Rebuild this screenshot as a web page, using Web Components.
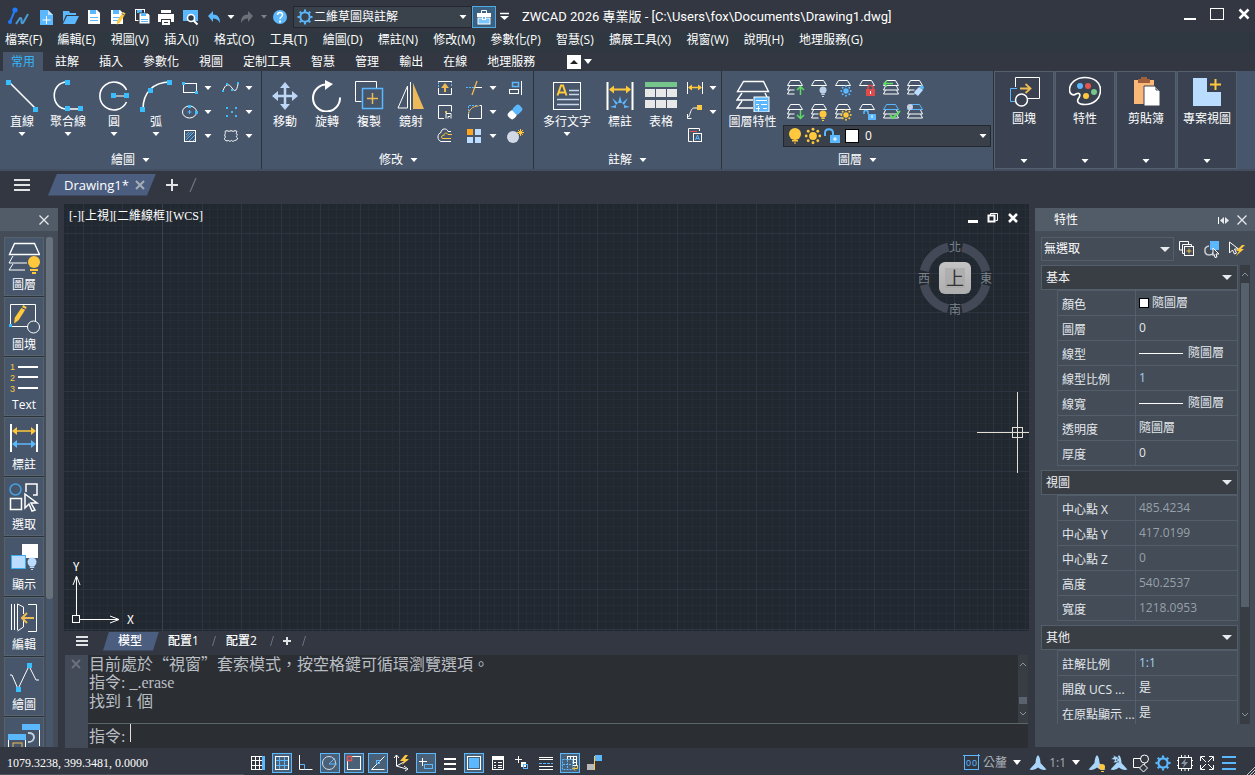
<!DOCTYPE html>
<html lang="zh-Hant">
<head>
<meta charset="utf-8">
<title>ZWCAD 2026</title>
<style>
html,body{margin:0;height:100%;background:#323841;overflow:hidden}
body{font:12px/16px "Open Sans","Noto Sans CJK TC",sans-serif;color:#fff}
</style>
</head>
<body>
<cad-app></cad-app>
<script>
const base = `:host{display:block}*{box-sizing:border-box}
button,select,input{font:inherit;color:inherit;background:none;border:0;padding:0;margin:0;border-radius:0;outline:0}
select{appearance:none}option{color:#000}`;
function define(name, css, html, setup) {
  const t = document.createElement('template');
  t.innerHTML = `<style>${base}${css}</style>${html}`;
  customElements.define(name, class extends HTMLElement {
    constructor() { super(); this.attachShadow({mode: 'open'}).append(t.content.cloneNode(true)); }
    connectedCallback() { if (setup) setup(this, this.shadowRoot); }
  });
}

/* ---------- icon library ---------- */
const W = 'stroke="#fff"', B = 'stroke="#5bb8ff"', Y = 'stroke="#ffc83d"';
const fb = 'fill="#5bb8ff"', fw = 'fill="#fff"', fy = 'fill="#ffc83d"';
const sq = (x, y, s = 3, f = '#38bdff') => `<rect x="${x}" y="${y}" width="${s}" height="${s}" fill="${f}" stroke="none"/>`;
const p = (d, a = W) => `<path d="${d}" ${a}/>`;
const r = (x, y, w, h, a = W) => `<rect x="${x}" y="${y}" width="${w}" height="${h}" ${a}/>`;
const c = (x, y, q, a = W) => `<circle cx="${x}" cy="${y}" r="${q}" ${a}/>`;
const bulb = (x, y, q, f) => c(x, y, q, `fill="${f}"`) + r(x - q * .5, y + q, q, 1.5, `fill="${f}"`) + r(x - 1, y + q + 2.5, 2, 1, `fill="${f}"`);
const sun = (x, y, f, k = 1) => { let s = c(x, y, 3 * k, `fill="${f}"`); for (let i = 0; i < 8; i++) { const a = i * Math.PI / 4; s += c(+(x + 5.2 * k * Math.cos(a)).toFixed(1), +(y + 5.2 * k * Math.sin(a)).toFixed(1), 1.1 * k, `fill="${f}"`); } return s; };
const top1 = (a = W) => p('M5.5 2.5h9l3 5h-15z', a);
const lay = (a = W) => top1(a) + p('M4.5 8l-2 4h7M4.5 12l-2 4h7', a);
const layw = a => top1(a) + p('M4.5 8l-2 4h15l-2-4M4.5 12l-2 4h15l-2-4');
const floppy = (x, y) => `<path d="M${x} ${y}h9l3 3v11h-12z" ${fw}/>` + r(x + 2, y, 6, 4, fb) + r(x + 2, y + 7, 8, 1, fb) + r(x + 2, y + 10, 8, 1, fb);
const gear = (x, y, q, f, w) => { let s = c(x, y, q * .62, `stroke="${f}" stroke-width="${w}"`); for (let i = 0; i < 8; i++) { const a = i * Math.PI / 4; s += `<path d="M${(x + q * .7 * Math.cos(a)).toFixed(1)} ${(y + q * .7 * Math.sin(a)).toFixed(1)}L${(x + q * Math.cos(a)).toFixed(1)} ${(y + q * Math.sin(a)).toFixed(1)}" stroke="${f}" stroke-width="${w}"/>`; } return s; };
const starP = (a = 'fill="#a9d6fa"') => `<path d="M10 2c2 2 2.500 6 2.500 8l6 6.500c-3 1-6 0-8.500-2-2.500 2-5.500 3-8.500 2l6-6.500c0-2 .5-6 2.500-8z" ${a}/>`;
const pencil = (x, y, k) => `<g transform="translate(${x} ${y}) scale(${k})"><path d="M9 0l3 2-7 11-4 3 .5-5z" ${fy}/><path d="M7 2l4 2" stroke="#47566b"/></g>`;
const BIG = 32, SM = 20;
const icons = {
  logo: [24, 22, p('M9 4L4 16', 'stroke="#2b7cf2" stroke-width="2"') + c(9, 4, 2.600, 'fill="#1f7bff"') + c(4, 16, 2, 'fill="#1f7bff"') + p('M10 18l4-6c3-1 0 7 3 5l5-9', 'stroke="#4a9ad4" stroke-width="2"')],
  new: [SM, SM, `<path d="M4 3h8l5 5v10h-13z" ${fb}/><path d="M12 3v5h5z" fill="#c4e4ff"/>` + p('M10.500 9v8M6.500 13h8')],
  open: [SM, SM, `<path d="M3 4h6l1 2h6v2h-10l-3 7z" ${fb}/><path d="M7 9h12l-4 8h-12z" ${fb}/>`],
  save: [SM, SM, floppy(4, 3)],
  saveas: [SM, SM, floppy(3, 3) + pencil(8, 5, .8)],
  saveall: [SM, SM, r(3.5, 2.5, 9, 11, W) + r(5, 3, 5, 3, fb) + `<path d="M7 6h9l2 2v9h-11z" ${fw} stroke="#323841"/>` + r(9, 6, 5, 3, fb) + r(9, 12, 7, 1, fb) + r(9, 14, 7, 1, fb)],
  print: [SM, SM, r(5, 3, 10, 3, fw) + `<path d="M2 7h16v8h-3v-3h-10v3h-3z" ${fw}/>` + r(6, 13, 8, 5, fw) + r(8, 15, 4, 1, 'fill="#323841"')],
  preview: [SM, SM, r(3, 3, 15, 11, fb) + c(11, 11, 3.5, 'fill="#323841" stroke="#fff" stroke-width="1.5"') + p('M13.500 13.500l4 4', W + ' stroke-width="2"')],
  undo: [SM, SM, `<path d="M4 9l5-5v3.500c5 0 7 3 7 8.500-2-3.500-4-4.500-7-4.500v3.500z" fill="#5bb8ff"/>`],
  redo: [SM, SM, `<path d="M16 9l-5-5v3.500c-5 0-7 3-7 8.500 2-3.500 4-4.500 7-4.500v3.500z" fill="#6c7178"/>`],
  help: [SM, SM, c(10, 10, 7, fb) + p('M7.500 8c0-3.500 5-3.500 5 0 0 2-2.500 2-2.500 4', W + ' stroke-width="1.500"') + r(9, 13.500, 2, 2, fw)],
  gear: [18, 18, gear(9, 9, 7.5, '#5bb8ff', 2)],
  case: [SM, SM, r(3, 6, 14, 4, fw) + p('M7.500 6v-2.500h5v2.500') + r(4, 11, 12, 6, 'fill="#7cc6ff" stroke="#fff"') + r(8, 8, 4, 5, fw) + r(9, 10, 2, 2, fb)],
  tri: [8, 6, `<path d="M0.500 1h7l-3.500 4z" ${fw}/>`],
  trigray: [8, 6, `<path d="M1 1h6l-3 3.500z" fill="#7b828b"/>`],
  tribig: [12, 7, `<path d="M1 1h10l-5 5z" fill="#e8ebee"/>`],
  trimid: [10, 7, `<path d="M1 1h8l-4 5z" fill="#fff"/>`],
  more: [10, 10, p('M0 1.500h9', W + ' stroke-width="1.500"') + `<path d="M0 4h9l-4.500 4z" ${fw}/>`],
  min: [14, 14, r(1, 11, 12, 2, fw)],
  max: [14, 14, r(.5, 1.500, 13, 11)],
  close: [12, 14, p('M1.500 2.500l9 9M10.500 2.500l-9 9', W + ' stroke-width="2.500"')],
  x: [12, 12, p('M1.500 1.500l9 9M10.500 1.500l-9 9', 'stroke="#e6e9ec" stroke-width="1.300"')],
  xgray: [10, 10, p('M1 1l8 8M9 1l-8 8', 'stroke="#a6adb6" stroke-width="2"')],
  xdim: [10, 10, p('M1 1l8 8M9 1l-8 8', 'stroke="#6c737d" stroke-width="1.800"')],
  burger: [16, 14, r(0, 1, 16, 2, 'fill="#e1e3e5"') + r(0, 6, 16, 2, 'fill="#e1e3e5"') + r(0, 11, 16, 2, 'fill="#e1e3e5"')],
  burgers: [12, 12, r(0, 1, 12, 2, 'fill="#e1e3e5"') + r(0, 5, 12, 2, 'fill="#e1e3e5"') + r(0, 9, 12, 2, 'fill="#e1e3e5"')],
  plus: [12, 12, p('M6 0v12M0 6h12', 'stroke="#e1e3e5" stroke-width="2"')],
  pluss: [10, 10, p('M5 1v8M1 5h8', 'stroke="#e1e3e5" stroke-width="2"')],
  slash: [8, 16, p('M1 15L7 1', 'stroke="#6d747f" stroke-width="1.200"')],
  slashs: [6, 12, p('M1.500 11L4.500 1', 'stroke="#6d747f"')],
  /* ribbon, large */
  line: [BIG, BIG, p('M3 2l28 28', W + ' stroke-width="1.600"') + sq(0, 0, 5) + sq(27, 27, 5)],
  pline: [BIG, BIG, p('M15 2c-17 0-17 27 0 27h14', W + ' stroke-width="1.600"') + sq(13, 0, 5) + sq(13, 26, 5) + sq(26, 26, 5)],
  circle: [BIG, BIG, p('M28.500 10a14 14 0 1 0 0 12', W + ' stroke-width="1.600"') + p('M16 16h14') + sq(13, 13, 5) + sq(26, 13, 5)],
  arc: [BIG, BIG, p('M3 29c0-16 10-27 27-27', W + ' stroke-width="1.600"') + sq(0, 27, 5) + sq(8, 8, 5) + sq(27, 0, 5)],
  move: [BIG, BIG, p('M16 6v20M6 16h20', 'stroke="#bcd6f5" stroke-width="2.500"') + `<path d="M16 2l5 6h-10zM16 30l5-6h-10zM3 16l6-5v10zM29 16l-6-5v10z" fill="#bcd6f5"/>`],
  rotate: [BIG, BIG, p('M16 4.500a13.500 13.500 0 1 0 13 13', W + ' stroke-width="2"') + `<path d="M14 0l8 4-8 6z" ${fw}/>`],
  copy: [BIG, BIG, p('M23.500 8v-6.500h-21v20h6') + r(9.500, 8.500, 20, 20, B + ' stroke-width="1.500"') + p('M19.500 13v11M14 18.500h11', 'stroke="#edbb56" stroke-width="1.500"')],
  mirror: [BIG, BIG, p('M15.500 2v28') + p('M12.500 6v22h-9.500z', W) + `<path d="M18 3l11 26h-11z" fill="#edb95a"/>`],
  mtext: [BIG, BIG, r(2.500, 2.500, 27, 27) + p('M6.500 15.500l3.500-10h2l3.500 10M8 12.500h6', Y + ' stroke-width="2"') + p('M18 10.500h10M18 14.500h10M6 19.500h22M6 24.500h22', 'stroke="#c8d8ea" stroke-width="1.500"')],
  dim: [BIG, BIG, p('M3.500 2v28M28.500 2v28', W + ' stroke-width="2"') + p('M6 9.500h20', Y + ' stroke-width="2"') + `<path d="M5 9.500l5-4v8zM27 9.500l-5-4v8z" ${fy}/>` + `<path d="M16 16l2 7h-4zM8 18l6 5-2 2zM24 18l-6 5 2 2zM6 27l6-2v3zM26 27l-6-2v3z" ${fb}/>`],
  table: [BIG, BIG, r(0, 2, 32, 5, 'fill="#74c68a"') + [0, 11, 22].map(x => r(x, 9, 10, 8, 'fill="#e8e8e8"') + r(x, 20, 10, 8, 'fill="#e8e8e8"')).join('')],
  layers: [34, BIG, p('M7.500 1.500h20l5 10h-31z', W + ' stroke-width="1.400"') + p('M6 13l-5 7h16M6 21l-5 7h16M29 13l2 4', W + ' stroke-width="1.400"') + r(18, 17, 15, 15, 'fill="#5bb8ff" stroke="#fff"') + p('M20 20.500h11M20 24.500h3M25 24.500h6M22.500 26v5M20 28.500h4M27 28.500h4', W)],
  block: [BIG, BIG, p('M7.500 11v-9.500h24v21h-12') + p('M9 12.500h-6.500v13h5', B) + p('M12 12.500h11M17.500 8l5 4.500-5 4.500', 'stroke="#edbb56" stroke-width="1.800"') + c(13.5, 24, 6, W + ' stroke-width="1.500"')],
  palette: [BIG, BIG, p('M16 1.500c9 0 15.500 5 15.500 12.500 0 9-7 14.500-15.500 14.500-7 0-9-3-6-7 2-3 0-5.500-3-3.500-3 2-6.500 0-6.500-4 0-7 6.500-12.500 15.500-12.500z', W + ' stroke-width="1.600"') + c(11, 10, 3, fb) + c(19, 10, 3, 'fill="#e6544f"') + c(25, 16, 3, 'fill="#74c68a"') + c(17, 20, 3, fy)],
  paste: [BIG, BIG, r(4, 4, 20, 24, 'fill="#fab878"') + r(8, 3, 12, 4, 'fill="#a0603c"') + r(11, 1, 6, 3, 'fill="#a0603c"') + `<path d="M14 10h11l5 5v15h-16z" ${fw} stroke="#3a4251"/>` + p('M26 10v4h4', 'stroke="#3a4251"')],
  project: [BIG, BIG, `<path d="M2 2h14v14h14v14h-28z" fill="#b9dcff"/>` + p('M24.500 3v11M19 8.500h11', Y + ' stroke-width="2"')],
  /* ribbon, small */
  rect: [SM, SM, r(3.5, 5.5, 13, 9) + sq(2, 4) + sq(15, 13)],
  ellipse: [SM, SM, `<ellipse cx="9.500" cy="10" rx="7" ry="6" ${W}/>` + sq(8, 3) + sq(15, 9) + p('M9.500 8v4M7.500 10h4', B)],
  hatch: [SM, SM, r(4.5, 4.5, 11, 11) + p('M6 9l3-3M6 14l8-8M9 15l6-6M13 15l2-2M6 11.500l5.500-5.500', B)],
  spline: [SM, SM, p('M2 13c2-7 6-8 9-3s5 2 6-4') + sq(1, 12, 2) + sq(5, 5, 2) + sq(10, 11, 2) + sq(16, 4, 2)],
  points: [SM, SM, sq(5, 5, 2) + sq(14, 5, 2) + sq(10, 9, 2) + sq(5, 13, 2) + sq(14, 13, 2)],
  cloud: [SM, SM, p('M4 5.500c1-1 3-1 4 0 1-1 3-1 4 0 1-1 3-1 4 0-1 2-1 2 .5 3.500-1.500 1-1.500 2 0 3 0 1.500-1 2.500-3 2.500-1 1-2 1-3 0-1 1-2 1-3 0-2 1-4 0-4-2 1-1 1-2 0-3.500 1-1 1-2 .5-3.500z')],
  stretch: [SM, SM, p('M3.500 10v6.500h13v-6.500') + p('M3.500 9v-5.500h13v5.500', B + ' stroke-dasharray="2 1"') + p('M3 3.500h14') + p('M10 14v-7', 'stroke="#edbb56" stroke-width="2"') + `<path d="M10 5l4 5h-8z" fill="#edbb56"/>`],
  scale: [SM, SM, p('M9 16.500h-5.500v-13h13v6') + p('M11 16.500v-5h5v5M13 16.500v-2h2') + sq(10, 9, 2, '#edbb56')],
  offset: [SM, SM, p('M16 5.500h-3c-1-4-7-3-7 1-4 1-4 8 0 9h10', W) + p('M16 12.500h-8c-3 0-1-4 1-3 0-3 3-3 4-1h4', Y)],
  trim: [SM, SM, p('M1 9.500h8', B + ' stroke-dasharray="2 1"') + p('M9 9.500h8') + p('M12 3l-5 14', 'stroke="#edbb56" stroke-width="1.300"')],
  fillet: [SM, SM, p('M3.500 12v-8.500h9', B + ' stroke-dasharray="2 1"') + p('M3.500 13c0-5 4-9 10-9', 'stroke="#edbb56"') + p('M3.500 12v4.500h13v-13h-2')],
  array: [SM, SM, sq(2, 3, 6, '#ffa51f') + sq(10, 3, 6, '#bcdcff') + sq(2, 11, 6, '#bcdcff') + sq(10, 11, 6, '#bcdcff')],
  align: [SM, SM, r(7.5, 4.5, 6, 4, B + ' stroke-width="1.500"') + r(4.5, 11.500, 9, 4) + p('M16.500 3v14')],
  eraser: [SM, SM, `<g transform="rotate(-45 10 10)"><rect x="2" y="6" width="8" height="8" rx="3" fill="#fff"/><rect x="9" y="6" width="9" height="8" rx="2.500" ${fb}/></g>`],
  explode: [SM, SM, c(8, 11, 6, 'fill="#d2d9e6"') + p('M15.500 3v7M12 6.500h7M13 4l5 5M18 4l-5 5', Y)],
  dimsmall: [SM, SM, p('M2.500 4v12M17.500 4v12') + p('M4 9.500h12', Y + ' stroke-width="1.500"') + `<path d="M3 9.500l4-3v6zM17 9.500l-4-3v6z" ${fy}/>`],
  leader: [SM, SM, p('M3.500 15c2-3 2-8 5-9h5') + p('M2.500 12v4.500h4') + sq(12, 3, 5, '#ffc83d')],
  textcheck: [SM, SM, p('M14.500 5v-2.500h-11v13h4') + p('M5 5.500h7', 'stroke="#e6544f"') + r(8.500, 7.500, 8, 8) + p('M10.500 14l2-5 2 5M11 12.500h3', B)],
  l1: [SM, SM, lay() + p('M15.500 17V9M12 12l3.500-3.500L19 12', 'stroke="#5edb62" stroke-width="1.500"')],
  l2: [SM, SM, top1() + bulb(14, 12, 3.5, '#bcd0ea')],
  l3: [SM, SM, top1() + sun(13, 13, '#5bb8ff', .9)],
  l4: [SM, SM, top1() + r(9, 11, 9, 7, 'fill="#e04a4a"') + p('M11 11v-2c0-2 5-2 5 0v2', 'stroke="#e04a4a" stroke-width="1.500"') + p('M13.500 13v3')],
  l5: [SM, SM, layw(W) + p('M3 5.500h9M6 2.500l-3 3 3 3', 'stroke="#5edb62" stroke-width="1.500"')],
  l6: [SM, SM, lay() + `<path d="M10 13l4-4 4 3-5 6-4-3z" fill="#bcdcff"/><path d="M14 9l3-2 2 2-1 3z" ${fb}/>`],
  l7: [SM, SM, lay() + p('M15.500 8v8M12 13l3.500 3.500L19 13', 'stroke="#5edb62" stroke-width="1.500"')],
  l8: [SM, SM, lay() + bulb(14, 12, 3.5, '#ffc83d')],
  l9: [SM, SM, lay() + sun(13, 13, '#ffc83d', .9)],
  l10: [SM, SM, top1() + r(11, 12, 8, 6, fb) + p('M7 12v-2c0-2 4-2 4 0v2', B + ' stroke-width="1.500"') + p('M15 13v3')],
  l11: [SM, SM, layw(B) + p('M9 13l3 3 7-7', 'stroke="#5edb62" stroke-width="2"')],
  l12: [SM, SM, layw(B) + c(5, 5, 3, 'fill="#c4d0e4"')],
  lbulb: [16, 18, bulb(8, 7, 6, '#ffc83d')],
  lsun: [18, 18, sun(9, 9, '#ffc83d', 1.3)],
  lock: [18, 18, r(7, 8, 10, 8, fb) + p('M2 9v-3c0-5 8-5 8 0v2', B + ' stroke-width="2"') + p('M12 10v4M10 12h4')],
  /* side palette */
  slayer: [BIG, BIG, p('M6.500 1.500h20l5 11h-30z', W + ' stroke-width="1.400"') + p('M5 14l-4 7h18M5 22l-4 6h16') + c(26, 20, 6, fy) + r(22, 27, 8, 2, fy) + r(24, 30, 4, 2, fy)],
  sblock: [BIG, BIG, p('M20 24.500h-17.500v-22h25v17') + c(25.5, 25, 6) + pencil(5, 3, 1.150) + sq(1, 22)],
  stext: [BIG, BIG, p('M10 5h20M10 15h20M10 26h20', W + ' stroke-width="2"') + '<g fill="#ffc83d" stroke="none" font-size="9" font-family="Liberation Sans"><text x="2" y="8">1</text><text x="2" y="19">2</text><text x="2" y="30">3</text></g>'],
  sdim: [BIG, BIG, p('M3 2v28M29 2v28', W + ' stroke-width="2"') + p('M6 9h20', Y + ' stroke-width="1.500"') + p('M6 22h20', B + ' stroke-width="1.500"') + `<path d="M4 9l5-4v8zM28 9l-5-4v8z" ${fy}/><path d="M4 22l5-4v8zM28 22l-5-4v8z" ${fb}/>`],
  sselect: [BIG, BIG, c(7.5, 7.500, 5.500, 'stroke="#46a0e0" stroke-width="1.500"') + r(2.500, 16.500, 11, 11, W + ' stroke-width="1.500"') + p('M18 10v-8h11v11h-4', W + ' stroke-width="1.500"') + p('M17 12l12 9h-6l4 7-3 1-3-7-4 4z', 'stroke="#fff" stroke-width="1.500" fill="#47566b"')],
  sshow: [BIG, BIG, r(14, 2, 16, 14, fw) + r(3.500, 13.500, 14, 13, 'fill="#bcdcff" stroke="#38aef0"') + bulb(24, 20, 4.500, '#bcdcff')],
  sedit: [BIG, BIG, p('M3.500 2v26M6.500 2v26M9.500 2v26M9.500 2l6 3v7M15.500 18v7l-6 4M20 2.500h8.500v27h-8.500') + p('M14 16h12M19 11l-5 5 5 5', 'stroke="#edbb56" stroke-width="2"')],
  sdraw: [BIG, BIG, p('M2 13h2l6 14 11-23 7 14h3') + sq(19, 1, 5) + sq(8, 25, 5)],
  slast: [BIG, BIG, r(14, 2, 18, 6, fb) + r(0, 12, 18, 6, fb) + p('M31.500 8v16M.500 18v13M17.500 18v13') + r(5, 21, 9, 11, 'stroke="#edbb56"') + p('M20 11c8-1 8 9 0 9', 'stroke="#c4d0e4" stroke-width="2"')],
  /* properties header */
  pin: [12, 12, p('M1.500 3v7', W) + `<path d="M7 3v7l-4-3.500zM8 3v7l4-3.500z" fill="#e6e9ec"/>`],
  quick: [18, 18, p('M4.500 10h-3v-8.500h9v3M7 13.500h-2.500v-9h9v2') + r(6.500, 6.500, 9, 9) + p('M11 8.500v5M8.500 11h5', 'stroke="#edbb56"')],
  pick: [18, 18, r(7, 1, 9, 9, fb) + p('M6 6c-6 1-5 9 0 9 3 0 4-1 5-3', 'stroke="#c8ccd2" stroke-width="1.500"') + `<path d="M10 8l6 6h-3l1 3-2 .5-1-3-1 1z" fill="#424b57" ${W}/>`],
  flash: [18, 18, p('M1.500 2v11l3-3 2 4 2-1-2-4h4z') + `<path d="M14 5l-6 6h3l-3 5 8-7h-3l4-4z" ${fy}/>`],
  up: [8, 6, p('M1 5l3-3 3 3', 'stroke="#8b939d"')],
  down: [8, 6, p('M1 1l3 3 3-3', 'stroke="#8b939d"')],
  /* status bar */
  t1: [SM, SM, p('M3.500 3v14M7.500 3v14M11.500 3v14M3 3.500h12M3 7.500h12M3 12.500h12M3 16.500h12') + r(14, 3, 3, 14, fb)],
  t2: [SM, SM, p('M7.500 4v12M12.500 4v12M4 7.500h12M4 12.500h12', B) + r(3.500, 3.500, 13, 13)],
  t3: [SM, SM, p('M3.500 2v14.500h13') + p('M4 11.500h4.500v5', B)],
  t4: [SM, SM, c(9, 10, 6.5, 'stroke="#d7dee6"') + p('M9 11h8M9 11l6-6', B)],
  t5: [SM, SM, r(3.500, 3.500, 13, 13) + r(3.500, 3.500, 4, 4, 'stroke="#e6544f" stroke-width="1.500"')],
  t6: [SM, SM, p('M3.500 16.500h13M3.500 16.500l13-13') + r(8.500, 7.500, 3, 3, B)],
  t7: [SM, SM, p('M4.500 2v11l11-6M4.500 13l10 3M2 5l2.500-3 2.500 3M12 13l4 3-3 2') + `<path d="M13 2l-5 6h4l-2 4 7-6h-4l3-4z" ${fy}/>`],
  t8: [SM, SM, p('M3 8.500h8M6.500 5v8') + r(8.500, 11.500, 8, 4, B)],
  t9: [SM, SM, p('M4 6h12M4 11h12M4 16h12', W + ' stroke-width="2"')],
  t10: [SM, SM, r(3.500, 3.500, 13, 13) + r(5, 5, 10, 10, fb)],
  t11: [SM, SM, r(4.500, 4.500, 11, 12) + r(4, 3, 12, 4, fw) + p('M6 9.500h2M10 9.500h4M6 12.500h2M10 12.500h4M6 14.500h2M10 14.500h4')],
  t12: [SM, SM, p('M3 6.500h7M6.500 3v7') + r(9, 9, 5, 5, fw) + r(11.500, 11.500, 4, 4, B)],
  t13: [SM, SM, p('M3 4.500h14M3 6.500h14M3 13.500h14M3 16.500h14') + p('M3 10.500h14', B + ' stroke-dasharray="3 1"')],
  t14: [SM, SM, r(7.500, 3.500, 9, 9) + p('M10.500 3v8M13.500 3v8M7 6.500h9M7 9.500h9') + r(2.500, 6.500, 10, 10, B + ' stroke-dasharray="2 1" fill="#4a6076"') + p('M3 11.500h9M7.500 7v9', B + ' stroke-dasharray="2 1"') + p('M17.500 12v3.500h-4M15 13.500l-2 2 2 2', Y)],
  t15: [SM, SM, r(11, 2, 7, 6, fb) + r(3, 11, 7, 6, 'fill="#b9b9b9"') + p('M10.500 3v14', Y)],
  units: [18, 18, p('M1.500 1v15M15.500 0v16M0 1.500h17M1 15.500h15', B) + '<g fill="#5bb8ff" stroke="none" font-size="9" font-family="Liberation Sans"><text x="3" y="12">0</text><text x="9" y="12">0</text></g>'],
  star: [SM, SM, starP()],
  starb: [SM, SM, starP() + c(15, 14, 3, fy) + r(14, 18, 3, 1, fy)],
  starz: [SM, SM, starP() + `<path d="M4 2l6 3-3 2 3 2-6 1 2-3-4-1 3-2z" fill="#a9d6fa" stroke="#323841" stroke-width=".5"/>`],
  shapes: [SM, SM, p('M10 5.500h-7.500v9h6') + c(13.5, 6, 4) + p('M12.500 11l4 4-4 4-4-4zM14 10l-1 2')],
  geart: [SM, SM, gear(10, 10, 7.5, '#5bb8ff', 2.200)],
  chip: [SM, SM, r(3.500, 4.500, 13, 11) + p('M6.500 2v2M10 2v2M13.500 2v2M6.500 16v2M10 16v2M13.500 16v2M2 7.500h1M2 12.500h1M17 7.500h1M17 12.500h1') + `<path d="M11 5l-5 6h3l-1 4 5-6h-3z" fill="#8b939d"/>`],
  full: [SM, SM, p('M3.500 8V3.500h4.500M12 3.500h4.500V8M16.500 12v4.500h-4.500M8 16.500h-4.500V12M4 4l5 5M16 4l-5 5M4 16l5-5M16 16l-5-5')],
  lines: [SM, SM, p('M3 4h14M3 10h14M3 16h14', B + ' stroke-width="2"')],
  grip: [8, 8, p('M0 8l8-8M3 8l5-5M6 8l2-2', 'stroke="#c9ccd0"')],
  /* drawing window */
  restore: [12, 12, p('M3.500 3v-1.500h7v7h-2', W) + r(1.500, 3.500, 6, 6, W + ' stroke-width="2"')],
};
define('cad-icon', ':host{display:block;flex:none}svg{display:block;fill:none}', '<svg aria-hidden="true"></svg>', (el, root) => {
  const [w, h, m] = icons[el.getAttribute('name')], s = root.querySelector('svg');
  s.setAttribute('width', w); s.setAttribute('height', h); s.setAttribute('viewBox', `0 0 ${w} ${h}`);
  s.innerHTML = m;
});
const ic = n => `<cad-icon name="${n}"></cad-icon>`;
const btn = (n, label, cls = '') => `<button class="${cls}" aria-label="${label}">${ic(n)}</button>`;

/* ---------- title bar ---------- */
define('title-bar', `
:host{display:flex;align-items:center;height:32px;padding:2px 4px 0 6px;background:#323741}
button{height:24px;width:24px;display:grid;place-items:center}
.logo{width:28px}.drop{width:9px}
.space{display:flex;align-items:center;width:179px;height:22px;border:1px solid #24282e;background:#3a424c;margin-left:1px;padding:0 4px 0 2px}
select{flex:1;height:20px}
.case{border:1px solid #4fa9e2;background:#3c6180;width:24px;height:22px}
.more{width:18px}
h1{font:13px/20px Roboto,"Noto Sans CJK TC",sans-serif;margin:0 0 0 8px;flex:1;white-space:nowrap}
.wins{display:flex;gap:13px;align-self:flex-start;padding-top:4px}
.win{width:14px;height:16px}
`, `<div class="logo">${ic('logo')}</div>
${btn('new', '新建')}${btn('open', '打開')}${btn('save', '保存')}${btn('saveas', '另存')}${btn('saveall', '全部保存')}${btn('print', '列印')}${btn('preview', '預覽')}${btn('undo', '復原')}${btn('tri', '復原列表', 'drop')}${btn('redo', '重做')}${btn('trigray', '重做列表', 'drop')}${btn('help', '說明')}
<label class="space">${ic('gear')}<select aria-label="工作空間"><option>二維草圖與註解</option></select>${ic('tri')}</label>
${btn('case', '工具箱', 'case')}${btn('more', '自訂', 'more')}
<h1>ZWCAD 2026 專業版 - [C:\\Users\\fox\\Documents\\Drawing1.dwg]</h1>
<div class="wins">${btn('min', '最小化', 'win')}${btn('max', '最大化', 'win')}${btn('close', '關閉', 'win')}</div>`);

/* ---------- menu ---------- */
define('menu-bar', `:host{display:flex;background:#2f3840}
nav{display:flex;align-items:flex-start;justify-content:space-between;height:20px;padding:0 5px;width:868px}
button{white-space:nowrap;height:16px;line-height:16px}`,
  '<nav>' + ['檔案(F)', '編輯(E)', '視圖(V)', '插入(I)', '格式(O)', '工具(T)', '繪圖(D)', '標註(N)', '修改(M)', '參數化(P)', '智慧(S)', '擴展工具(X)', '視窗(W)', '說明(H)', '地理服務(G)'].map(t => `<button>${t}</button>`).join('') + '</nav>');

define('ribbon-tabs', `:host{display:flex;align-items:center;height:19px;padding-left:3px;background:#323741}
button{height:19px;padding:0 10px;white-space:nowrap}
.on{background:#47566b;color:#35b5fa;padding:0 8px;margin-right:2px}
.fold{background:#fff;width:14px;height:14px;padding:0;margin:0 2px 0 22px;display:grid;place-items:center}
.fold i{border:4px solid transparent;border-top:0;border-bottom:4px solid #222}
.dd{padding:0}`,
  ['常用', '註解', '插入', '參數化', '視圖', '定制工具', '智慧', '管理', '輸出', '在線', '地理服務'].map((t, i) => `<button class="${i ? '' : 'on'}">${t}</button>`).join('') +
  `<button class="fold" aria-label="摺疊"><i></i></button><button class="dd" aria-label="選項">${ic('trimid')}</button>`);

/* ---------- ribbon ---------- */
define('big-tool', `button{width:100%;display:flex;flex-direction:column;align-items:center;padding-top:4px;height:72px}
span{line-height:16px;white-space:nowrap;margin:2px 0 1px}`, '<button></button>', (el, root) => {
  root.querySelector('button').innerHTML = ic(el.getAttribute('icon')) + `<span>${el.getAttribute('label')}</span>` + (el.hasAttribute('menu') ? ic('tri') : '');
});
define('small-tool', `:host{height:24px}button{display:flex;align-items:center;height:24px;padding:0 2px;gap:4px}`, '<button></button>', (el, root) => {
  const b = root.querySelector('button');
  b.setAttribute('aria-label', el.getAttribute('icon'));
  b.innerHTML = ic(el.getAttribute('icon')) + (el.hasAttribute('menu') ? ic('tri') : '');
});
define('ribbon-panel', `:host{display:flex;flex-direction:column;flex:none;border-right:1px solid #2c323a;height:98px;padding-top:5px}
.tools{display:flex;height:75px;flex:none}
.name{display:flex;align-items:center;justify-content:center;gap:7px;height:18px}`,
  `<div class="tools"><slot></slot></div><button class="name"><span></span>${ic('tri')}</button>`,
  (el, root) => { root.querySelector('span').textContent = el.getAttribute('name'); });
define('folded-panel', `:host{flex:none;width:60px}
button{width:100%;height:98px;border:1px solid #565f6c;background:#3a4251;display:flex;flex-direction:column;align-items:center;padding:4px 0}
span{white-space:nowrap;margin-top:3px}
.g{flex:1}`, `<button></button>`, (el, root) => {
  root.querySelector('button').innerHTML = ic(el.getAttribute('icon')) + `<span>${el.getAttribute('label')}</span><i class="g"></i>` + ic('tri');
});
define('layer-select', `:host{display:flex;align-items:center;width:208px;height:22px;border:1px solid #23282e;background:#394049;padding:0 3px;gap:1px;margin-top:1px}
b{width:14px;height:14px;background:#fff;border:1px solid #000;margin:0 5px 0 3px}select{flex:1;height:20px}`,
  `${ic('lbulb')}${ic('lsun')}${ic('lock')}<b></b><select aria-label="圖層"><option>0</option></select>${ic('tri')}`);
const big = (i, l, w, m = '') => `<big-tool style="width:${w}px" icon="${i}" label="${l}" ${m}></big-tool>`;
const sm = (i, m = '') => `<small-tool icon="${i}" ${m}></small-tool>`;
define('ribbon-bar', `:host{display:flex;background:#47566b;height:100px;border-bottom:2px solid #434f61}
.c{flex:none}.six{display:grid;grid-template-columns:repeat(6,24px)}
.folds{display:flex;gap:1px}`, `
<ribbon-panel name="繪圖" style="width:262px">${big('line', '直線', 44, 'menu')}${big('pline', '聚合線', 48, 'menu')}${big('circle', '圓', 44, 'menu')}${big('arc', '弧', 40, 'menu')}
<div class="c" style="width:41px;margin-left:2px">${sm('rect', 'menu')}${sm('ellipse', 'menu')}${sm('hatch', 'menu')}</div><div class="c">${sm('spline', 'menu')}${sm('points', 'menu')}${sm('cloud', 'menu')}</div></ribbon-panel>
<ribbon-panel name="修改" style="width:272px;padding-left:2px">${big('move', '移動', 42)}${big('rotate', '旋轉', 42)}${big('copy', '複製', 42)}${big('mirror', '鏡射', 42)}
<div class="c" style="width:30px;margin-left:1px">${sm('stretch')}${sm('scale')}${sm('offset')}</div><div class="c" style="width:40px">${sm('trim', 'menu')}${sm('fillet', 'menu')}${sm('array', 'menu')}</div><div class="c">${sm('align')}${sm('eraser')}${sm('explode')}</div></ribbon-panel>
<ribbon-panel name="註解" style="width:188px">${big('mtext', '多行文字', 66, 'menu')}${big('dim', '標註', 40)}${big('table', '表格', 42)}
<div class="c" style="margin-left:1px">${sm('dimsmall', 'menu')}${sm('leader', 'menu')}${sm('textcheck')}</div></ribbon-panel>
<ribbon-panel name="圖層" style="width:272px">${big('layers', '圖層特性', 61)}
<div class="c"><div class="six">${[1, 2, 3, 4, 5, 6, 7, 8, 9, 10, 11, 12].map(n => sm('l' + n)).join('')}</div><layer-select></layer-select></div></ribbon-panel>
<div class="folds"><folded-panel icon="block" label="圖塊"></folded-panel><folded-panel icon="palette" label="特性"></folded-panel><folded-panel icon="paste" label="剪貼簿"></folded-panel><folded-panel icon="project" label="專案視圖"></folded-panel></div>`);

/* ---------- document tabs ---------- */
define('doc-tabs', `:host{display:flex;align-items:center;height:33px;padding:0 14px 6px;background:#323741}
button{flex:none}
.tab{display:flex;align-items:center;gap:6px;height:22px;width:108px;margin:0 10px 0 18px;padding-left:16px;background:#4c5e80;clip-path:polygon(9px 0,100% 0,calc(100% - 9px) 100%,0 100%);font-size:13px}
.s{margin-left:11px}`,
  `${btn('burger', '清單')}<button class="tab">Drawing1*${ic('xgray')}</button>${btn('plus', '新增')}<span class="s">${ic('slash')}</span>`);

/* ---------- left palette ---------- */
define('side-palette', `:host{display:flex;flex-direction:column;background:#434c57;overflow:hidden}
header{height:23px;background:#525c68;display:flex;align-items:center;justify-content:flex-end;padding-right:8px;flex:none}
.body{display:grid;grid-template-columns:40px 7px;gap:2px;padding:6px 0 0 4px;flex:1;min-height:0}
.list{overflow:hidden;min-height:0}
.list button{display:flex;flex-direction:column;align-items:center;width:40px;height:59px;margin-bottom:1px;background:#47566b;border:1px solid #57626f;box-shadow:0 1px 0 #2b3138;padding-top:4px}
.list span{margin-top:3px;line-height:16px}
.bar{background:#47566b;width:7px}.bar i{display:block;height:71%;background:#68727d;border-radius:3px}`,
  `<header>${btn('x', '關閉')}</header><div class="body"><div class="list">${[['slayer', '圖層'], ['sblock', '圖塊'], ['stext', 'Text'], ['sdim', '標註'], ['sselect', '選取'], ['sshow', '顯示'], ['sedit', '編輯'], ['sdraw', '繪圖']].map(([i, l]) => `<button>${ic(i)}<span>${l}</span></button>`).join('')}${btn('slast', '視窗')}</div><div class="bar"><i></i></div></div>`);

/* ---------- drawing area ---------- */
define('drawing-area', `:host{position:relative;background:#212830;overflow:hidden;flex:1;min-height:0}
.grid{position:absolute;inset:0;width:100%;height:100%}
.view{position:absolute;left:5px;top:4px;line-height:16px;font-family:"Liberation Serif","Noto Sans CJK TC",serif;font-size:12px}
.win{position:absolute;right:10px;top:8px;display:flex;gap:8px;align-items:center}
.cube{position:absolute;right:36px;top:28px}.ucs{position:absolute;left:4px;bottom:0}.cross{position:absolute;right:0;top:188px}
svg{display:block;fill:none}
text{font-family:"Noto Sans CJK TC",sans-serif;font-size:12px;fill:#7c838c}`,
  `<svg class="grid" shape-rendering="crispEdges"></svg>
<div class="view">[-][上視][二維線框][WCS]</div>
<div class="win"><button aria-label="最小化"><svg width="12" height="12"><path d="M1 9.500h10" stroke="#fff" stroke-width="3"/></svg></button>${btn('restore', '還原')}<button aria-label="關閉"><svg width="12" height="12"><path d="M2 2l8 8M10 2l-8 8" stroke="#fff" stroke-width="2.500"/></svg></button></div>
<svg class="cube" width="76" height="94" viewBox="0 -8 76 94">
<defs><linearGradient id="g" x2="0" y2="1"><stop stop-color="#c4c4c4"/><stop offset="1" stop-color="#adadad"/></linearGradient></defs>
<circle cx="38" cy="38" r="31.500" stroke="#434956" stroke-width="9" stroke-dasharray="35.500 13.980" stroke-dashoffset="-7"/>
<rect x="22" y="22" width="32" height="32" rx="6" fill="url(#g)"/><rect x="28" y="28" width="20" height="20" fill="#a5a5a5" opacity=".6"/>
<text x="29" y="45" style="font-size:18px;fill:#333">上</text>
<text x="32" y="12">北</text><text x="32" y="74">南</text><text x="1" y="43">西</text><text x="63" y="43">東</text></svg>
<svg class="ucs" width="80" height="76" viewBox="0 0 80 76"><g stroke="#fff"><rect x="4.500" y="60.500" width="7" height="7"/><path d="M8.500 60V22M5 30l3.500-9 3.500 9M12 64.500h39M42 61l9 3.500-9 3.500"/></g><text x="5" y="16" style="fill:#fff">Y</text><text x="59" y="69" style="fill:#fff">X</text></svg>
<svg class="cross" width="52" height="82" stroke="#e4dfd5" shape-rendering="crispEdges"><path d="M0 40.500h52M40.500 0v81"/><rect x="35.500" y="35.500" width="10" height="10"/></svg>`,
  (el, root) => {
    const step = 39.58, d = {minor: '', major: '', main: ''};
    const run = (origin, length, axis, line) => {
      for (let i = Math.ceil(-origin / (step / 5)); origin + i * step / 5 < length; i++) {
        const kind = axis && i === 0 ? 'main' : i % 5 === 0 ? 'major' : 'minor';
        d[kind] += line(Math.round(origin + i * step / 5) + .5);
      }
    };
    run(98, 4000, true, v => `M${v} 0V3000`);
    run(227, 3000, false, v => `M0 ${v}H4000`);
    root.querySelector('.grid').innerHTML = `<path d="${d.minor}" stroke="#262d36"/><path d="${d.major}" stroke="#2e3540"/><path d="${d.main}" stroke="#3a404d"/>`;
  });

/* ---------- layout tabs ---------- */
define('layout-tabs', `:host{display:flex;align-items:center;height:24px;padding:0 12px 4px;background:#323741}
button{flex:none}
.on{width:56px;height:19px;margin:0 9px 0 15px;padding-right:2px;background:#4c5e80;clip-path:polygon(6px 0,100% 0,calc(100% - 6px) 100%,0 100%)}
.s{margin:0 9px 0 12px}.s2{margin:0 7px 0 12px}.s3{margin-left:9px}.on,.t{font-weight:500}`,
  `${btn('burgers', '清單')}<button class="on">模型</button><button class="t">配置1</button><span class="s">${ic('slashs')}</span><button class="t">配置2</button><span class="s2">${ic('slashs')}</span>${btn('pluss', '新增')}<span class="s3">${ic('slashs')}</span>`);

/* ---------- command line ---------- */
define('command-line', `:host{display:grid;grid-template-columns:23px 1fr;height:93px;margin:0 1px;background:#2b2e33;color:#b9bec5;font:16px/19px "Liberation Serif","Noto Sans CJK TC",serif}
.strip{background:#434a58;padding:4px 0 0 6px}.strip button{display:block}
.main{display:flex;flex-direction:column;min-width:0}
.log{height:69px;display:flex;border-bottom:1px solid #59676b;overflow:hidden}
.text{flex:1;padding-left:1px;margin-top:-1px}
p{margin:0;white-space:nowrap}.c{font-family:"Noto Sans CJK TC",sans-serif}
.bar{width:10px;background:#383c43;display:flex;flex-direction:column;align-items:center;padding:6px 0 6px}
.bar i{margin:auto 0 7px;width:8px;height:7px;background:#59626e}
label{display:flex;align-items:center;height:24px;padding-left:1px}
.caret{width:1px;height:18px;background:#e4dfd5;margin:-6px 0 0 5px}input{flex:1;height:20px}`,
  `<div class="strip">${btn('xdim', '關閉')}</div><div class="main"><div class="log"><div class="text"><p class="c">目前處於“視窗”套索模式，按空格鍵可循環瀏覽選項。</p><p>指令: _.erase</p><p>找到 1 個</p></div><div class="bar">${ic('up')}<i></i>${ic('down')}</div></div>
<label>指令:<span class="caret"></span><input type="text" aria-label="指令"></label></div>`);

/* ---------- properties ---------- */
define('prop-group', `:host{margin-bottom:4px}
.h{display:flex;align-items:center;justify-content:space-between;width:100%;height:25px;border:1px solid #535e6a;background:#393e45;padding:0 4px;color:#f0f2f4}
table{width:calc(100% - 16px);margin-left:16px;border-collapse:collapse;table-layout:fixed;color:#e4e8ec}
th,td{font-weight:400;text-align:left;height:25px;border:1px solid #535e6a;padding:0 3px;white-space:nowrap;overflow:hidden}
th{width:78px;padding:4px 0 0 4px}
td.d{color:#98a0a9}td.b{color:#a8d2f5}
div.v{display:flex;align-items:center;gap:5px}.c .v{gap:3px}
.sw{width:10px;height:10px;background:#fff;border:1px solid #000}.ln{width:44px;height:1px;background:#fff}`,
  `<button class="h"><span></span>${ic('tribig')}</button><table><tbody></tbody></table>`, (el, root) => {
    root.querySelector('span').textContent = el.getAttribute('name');
    const kinds = {c: '<i class="sw"></i>', l: '<i class="ln"></i>'};
    root.querySelector('tbody').innerHTML = el.getAttribute('rows').split('|').map(s => {
      const [k, v, t = ''] = s.split('=');
      return `<tr><th scope="row">${k}</th><td class="${t}"><div class="v">${kinds[t] || ''}<span>${v}</span></div></td></tr>`;
    }).join('');
  });
define('properties-panel', `:host{display:flex;flex-direction:column;background:#434c57;overflow:hidden}
header{height:23px;background:#525c68;display:flex;align-items:center;padding:0 7px 0 19px;gap:7px;flex:none}
h2{font:inherit;margin:0;flex:1}
.pick{display:flex;align-items:center;padding:6px 9px 4px 6px;gap:4px;flex:none}
.icons{display:flex;gap:7px}
.sel{flex:1;display:flex;align-items:center;height:24px;border:1px solid #535e6a;padding:0 2px;min-width:0}
select{flex:1;min-width:0;height:22px}
.body{display:grid;grid-template-columns:1fr 10px;gap:2px;flex:1;min-height:0;padding:0 5px 0 6px;margin-bottom:23px}
.groups{overflow:hidden;min-height:0}
.bar{background:#383c43;display:flex;flex-direction:column;align-items:center;padding:6px 0}
.bar i{width:8px;height:324px;background:#56606c;margin:6px 0 auto}`,
  `<header><h2>特性</h2>${btn('pin', '自動隱藏')}${btn('x', '關閉')}</header>
<div class="pick"><label class="sel"><select aria-label="選取"><option>無選取</option></select>${ic('tribig')}</label><div class="icons">${btn('quick', '快速選取')}${btn('pick', '選取物件')}${btn('flash', '切換')}</div></div>
<div class="body"><div class="groups">
<prop-group name="基本" rows="顏色=隨圖層=c|圖層=0|線型=隨圖層=l|線型比例=1=b|線寬=隨圖層=l|透明度=隨圖層|厚度=0"></prop-group>
<prop-group name="視圖" rows="中心點 X=485.4234=d|中心點 Y=417.0199=d|中心點 Z=0=d|高度=540.2537=d|寬度=1218.0953=d"></prop-group>
<prop-group name="其他" rows="註解比例=1:1=b|開啟 UCS ...=是|在原點顯示 ...=是"></prop-group></div>
<div class="bar">${ic('up')}<i></i>${ic('down')}</div></div>`);

/* ---------- status bar ---------- */
define('status-bar', `:host{display:flex;align-items:center;height:26px;padding-top:1px;background:#323741}
.pos{width:244px;height:24px;flex:none;border-bottom:1px solid #4d535c;padding:4px 0 0 7px;font:12px/16px "Liberation Serif","Noto Sans CJK TC",serif;margin-right:2px}
button{flex:none;width:24px;height:24px;display:grid;place-items:center}
.on cad-icon{background:#4a6076;outline:1px solid #5bb8ff;outline-offset:-1px}
.g{flex:1}.txt{color:#a8adb5;width:auto}.dd{width:20px}.s{width:22px}.grip{align-self:flex-end;margin-left:7px}`,
  `<div class="pos">1079.3238, 399.3481, 0.0000</div>
${['柵格', '捕捉', '正交', '極軸', '物件捕捉', '追蹤', '動態UCS', '動態輸入', '線寬', '透明度', '快捷特性', '選擇循環', '註釋監視', '三維捕捉', '隔離'].map((l, i) => btn('t' + (i + 1), l, [1, 3, 4, 5, 7, 9, 13].includes(i) ? 'on' : '')).join('')}
<span class="g"></span>${btn('units', '單位', 's')}<button class="txt">公釐</button>${btn('trimid', '單位列表', 'dd')}${btn('star', '註釋比例', 's')}<button class="txt">1:1</button>${btn('trimid', '比例列表', 'dd')}${btn('starb', '註釋可見', 's')}${btn('starz', '自動比例', 's')}${btn('shapes', '物件', 's')}${btn('geart', '設定', 's')}${btn('chip', '硬體', 's')}${btn('full', '全螢幕', 's')}${btn('lines', '選單', 's')}<span class="grip">${ic('grip')}</span>`);

/* ---------- application shell ---------- */
define('cad-app', `:host{display:flex;flex-direction:column;height:100vh;background:#323741}
main{flex:1;min-height:0;display:grid;grid-template-columns:58px 1fr 220px;gap:6px;padding-bottom:1px}
.center{display:flex;flex-direction:column;min-width:0;min-height:0}
side-palette,properties-panel{margin:4px 0 1px;min-height:0}
header,status-bar{flex:none}`,
  `<header><title-bar></title-bar><menu-bar></menu-bar><ribbon-tabs></ribbon-tabs><ribbon-bar></ribbon-bar><doc-tabs></doc-tabs></header>
<main><side-palette></side-palette><div class="center"><drawing-area></drawing-area><layout-tabs></layout-tabs><command-line></command-line></div><properties-panel></properties-panel></main>
<status-bar></status-bar>`);
</script>
</body>
</html>
